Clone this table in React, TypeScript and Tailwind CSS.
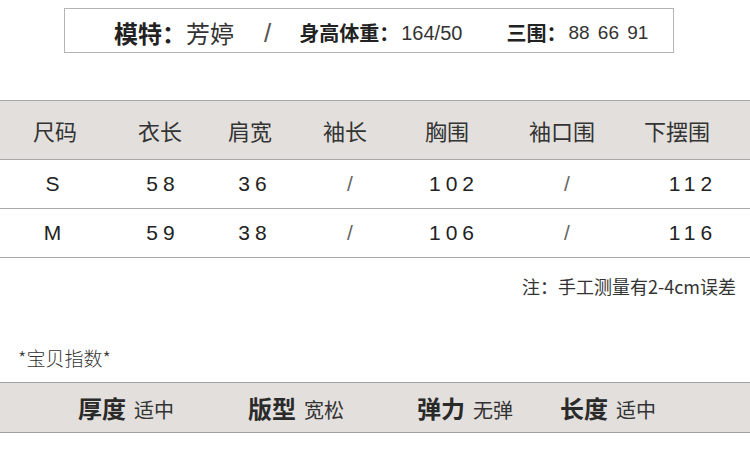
const cjk = "font-['Noto_Sans_CJK_SC',sans-serif]";

const headers = ["尺码", "衣长", "肩宽", "袖长", "胸围", "袖口围", "下摆围"];
const widths = ["w-[110px]", "w-[100px]", "w-[90px]", "w-[100px]", "w-[104px]", "w-[126px]", "w-[120px]"];
// small nudges so the header words sit where the picture has them
const headShift = ["", "", "pr-[10px]", "pr-[10px]", "pr-[10px]", "pr-[10px]", "pr-[26px]"];
const dataShift = ["", "pl-[6px]", "", "", "pl-[4px]", "", "pl-[6px]"];

const rows = [
  ["S", "58", "36", "/", "102", "/", "112"],
  ["M", "59", "38", "/", "106", "/", "116"],
];

const stats = [
  { k: "厚度", v: "适中", w: "w-[170px]" },
  { k: "版型", v: "宽松", w: "w-[169px]" },
  { k: "弹力", v: "无弹", w: "w-[143px]" },
  { k: "长度", v: "适中", w: "w-[140px]" },
];

export default function App() {
  return (
    <div className={`w-[750px] h-[458px] bg-white text-[#2a2a2a] overflow-hidden pt-[8px] ${cjk}`}>
      {/* model info box */}
      <div className="ml-[64px] w-[610px] h-[45px] border border-[#b4b4b4] flex items-center pl-[49px] pt-[5px]">
        <span className="text-[24px] font-bold text-[#222]">模特：</span>
        <span className="text-[24px] text-[#333]">芳婷</span>
        <span className="ml-[30px] text-[26px] font-light text-[#555] font-['Liberation_Sans',sans-serif]">/</span>
        <span className="ml-[28px] text-[20px] font-bold text-[#222]">身高体重：</span>
        <span className="ml-[2px] text-[20px] font-['Liberation_Sans',sans-serif] text-[#333]">164/50</span>
        <span className="ml-[44px] text-[20px] font-bold text-[#222]">三围：</span>
        <span className="ml-[2px] text-[19px] font-['Liberation_Sans',sans-serif] text-[#333] [word-spacing:3px]">88 66 91</span>
      </div>

      {/* size table */}
      <div className="mt-[47px] border-t border-[#a8a8a8]">
        <div className="flex h-[59px] items-center bg-[#e2dfdc] border-b border-[#a8a8a8]">
          {headers.map((h, i) => (
            <div key={h} className={`${widths[i]} ${headShift[i]} text-center text-[22px] text-[#333]`}>
              {h}
            </div>
          ))}
        </div>
        {rows.map((r) => (
          <div key={r[0]} className="flex h-[49px] items-center border-b border-[#a8a8a8]">
            {r.map((c, i) => (
              <div
                key={i}
                className={`${widths[i]} ${dataShift[i]} text-center text-[21px] text-[#222] font-['Liberation_Sans',sans-serif] ${
                  c === "/" ? "text-[#666] font-light" : "tracking-[5px]"
                }`}
              >
                {c}
              </div>
            ))}
          </div>
        ))}
      </div>

      <div className="h-[56px] flex items-center justify-end pr-[14px] text-[18px] text-[#333]">
        注：手工测量有2-4cm误差
      </div>

      <div className="mt-[30px] pl-[18px] h-[28px] flex items-center text-[19px] font-light text-[#333]">*宝贝指数*</div>

      {/* product index band */}
      <div className="mt-[10px] h-[51px] bg-[#e2dfdc] border-y border-[#a0a0a0] flex items-center pl-[78px]">
        {stats.map((s) => (
          <div key={s.k} className={`${s.w} flex items-baseline`}>
            <span className="text-[24px] font-bold text-[#2a2a2a]">{s.k}</span>
            <span className="ml-[8px] text-[20px] text-[#333]">{s.v}</span>
          </div>
        ))}
      </div>
    </div>
  );
}
